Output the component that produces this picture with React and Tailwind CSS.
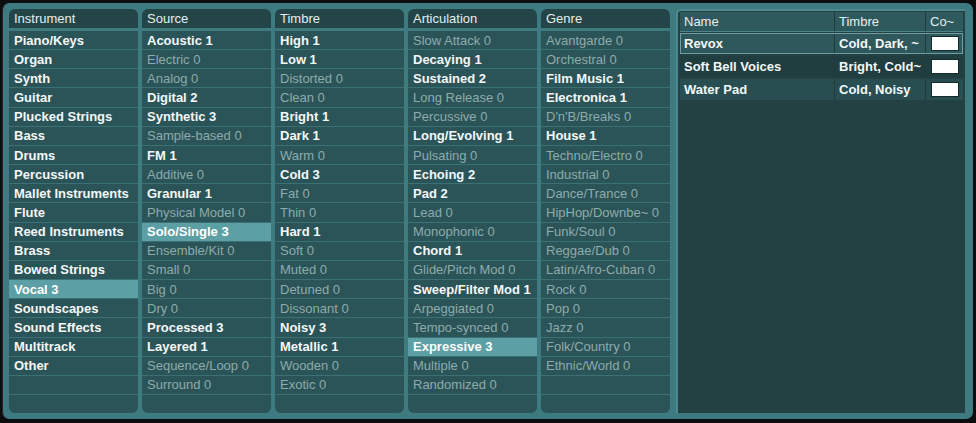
import React from 'react';

const font = { fontFamily: '"Liberation Sans", Arial, sans-serif' };

const columns = [
  {
    title: 'Instrument',
    items: [
      ['Piano/Keys', 1], ['Organ', 1], ['Synth', 1], ['Guitar', 1], ['Plucked Strings', 1],
      ['Bass', 1], ['Drums', 1], ['Percussion', 1], ['Mallet Instruments', 1], ['Flute', 1],
      ['Reed Instruments', 1], ['Brass', 1], ['Bowed Strings', 1], ['Vocal 3', 2], ['Soundscapes', 1],
      ['Sound Effects', 1], ['Multitrack', 1], ['Other', 1],
    ],
  },
  {
    title: 'Source',
    items: [
      ['Acoustic 1', 1], ['Electric 0', 0], ['Analog 0', 0], ['Digital 2', 1], ['Synthetic 3', 1],
      ['Sample-based 0', 0], ['FM 1', 1], ['Additive 0', 0], ['Granular 1', 1], ['Physical Model 0', 0],
      ['Solo/Single 3', 2], ['Ensemble/Kit 0', 0], ['Small 0', 0], ['Big 0', 0], ['Dry 0', 0],
      ['Processed 3', 1], ['Layered 1', 1], ['Sequence/Loop 0', 0], ['Surround 0', 0],
    ],
  },
  {
    title: 'Timbre',
    items: [
      ['High 1', 1], ['Low 1', 1], ['Distorted 0', 0], ['Clean 0', 0], ['Bright 1', 1],
      ['Dark 1', 1], ['Warm 0', 0], ['Cold 3', 1], ['Fat 0', 0], ['Thin 0', 0],
      ['Hard 1', 1], ['Soft 0', 0], ['Muted 0', 0], ['Detuned 0', 0], ['Dissonant 0', 0],
      ['Noisy 3', 1], ['Metallic 1', 1], ['Wooden 0', 0], ['Exotic 0', 0],
    ],
  },
  {
    title: 'Articulation',
    items: [
      ['Slow Attack 0', 0], ['Decaying 1', 1], ['Sustained 2', 1], ['Long Release 0', 0], ['Percussive 0', 0],
      ['Long/Evolving 1', 1], ['Pulsating 0', 0], ['Echoing 2', 1], ['Pad 2', 1], ['Lead 0', 0],
      ['Monophonic 0', 0], ['Chord 1', 1], ['Glide/Pitch Mod 0', 0], ['Sweep/Filter Mod 1', 1], ['Arpeggiated 0', 0],
      ['Tempo-synced 0', 0], ['Expressive 3', 2], ['Multiple 0', 0], ['Randomized 0', 0],
    ],
  },
  {
    title: 'Genre',
    items: [
      ['Avantgarde 0', 0], ['Orchestral 0', 0], ['Film Music 1', 1], ['Electronica 1', 1], ["D'n'B/Breaks 0", 0],
      ['House 1', 1], ['Techno/Electro 0', 0], ['Industrial 0', 0], ['Dance/Trance 0', 0], ['HipHop/Downbe~ 0', 0],
      ['Funk/Soul 0', 0], ['Reggae/Dub 0', 0], ['Latin/Afro-Cuban 0', 0], ['Rock 0', 0], ['Pop 0', 0],
      ['Jazz 0', 0], ['Folk/Country 0', 0], ['Ethnic/World 0', 0],
    ],
  },
];

const results = [
  { name: 'Revox', timbre: 'Cold, Dark, ~', tone: 'sel' },
  { name: 'Soft Bell Voices', timbre: 'Bright, Cold~', tone: 'dark' },
  { name: 'Water Pad', timbre: 'Cold, Noisy', tone: 'mid' },
];

function Column({ title, items }) {
  const rows = [...items];
  while (rows.length < 20) rows.push(['', 0]);
  return (
    <div className="flex h-[404px] w-[129px] flex-col">
      <div className="flex h-[19px] shrink-0 items-center rounded-t-[6px] bg-[#244548] px-[5px] text-[13px] leading-[15px] text-[#e4eeee]">
        {title}
      </div>
      <div className="mt-[3px] flex min-h-0 flex-1 flex-col gap-px overflow-hidden rounded-b-[6px] bg-[#3a7175]">
        {rows.map(([label, state], i) => (
          <div
            key={i}
            className={
              'flex min-h-0 flex-1 items-center px-[5px] text-[13px] leading-[15px] whitespace-nowrap ' +
              (state === 2
                ? 'bg-[#5c9fa4] font-bold text-white'
                : state === 1
                  ? 'bg-[#2b5458] font-bold text-[#f4f8f8]'
                  : 'bg-[#2b5458] text-[#8eabab]')
            }
          >
            {label}
          </div>
        ))}
      </div>
    </div>
  );
}

function ResultsPanel() {
  const rowBg = { sel: 'bg-[#2e585b] outline outline-1 -outline-offset-1 outline-[#6d9fa2]', dark: 'bg-[#203d3f]', mid: 'bg-[#294e51]' };
  return (
    <div className="ml-[6px] flex h-[404px] w-[289px] flex-col rounded-tl-[5px] border-l-2 border-t-2 border-[#4b8a8f] bg-[#234143] px-[2px] pt-px">
      <div className="flex h-[20px] border-b border-[#4d8387] bg-[#2e5a5d] text-[13px] text-[#e6efef]">
        <div className="flex w-[155px] items-center border-r border-[#1f3b3d] px-[4px]">Name</div>
        <div className="flex w-[91px] items-center border-r border-[#1f3b3d] px-[4px]">Timbre</div>
        <div className="flex flex-1 items-center px-[4px]">Co~</div>
      </div>
      <div className="mt-px flex flex-col gap-[2px]">
        {results.map((r) => (
          <div key={r.name} className={'flex h-[21px] text-[13px] font-bold text-[#f4f8f8] ' + rowBg[r.tone]}>
            <div className="flex w-[155px] items-center border-r border-[#1f3b3d] px-[4px]">{r.name}</div>
            <div className="flex w-[91px] items-center border-r border-[#1f3b3d] px-[4px] whitespace-nowrap">{r.timbre}</div>
            <div className="flex flex-1 items-center justify-center">
              <div className="h-[15px] w-[28px] border border-[#162a2b] bg-white" />
            </div>
          </div>
        ))}
      </div>
    </div>
  );
}

export default function App() {
  return (
    <div className="h-[423px] w-[976px] bg-[#0d0d0f] pb-[4px] pl-[2px] pr-[3px] pt-[3px]" style={font}>
      <div className="flex h-full rounded-[7px] border-l border-[#2a1d2c] bg-[#3d7b80] pl-[6px] pt-[6px]">
        <div className="flex gap-[4px]">
          {columns.map((c) => (
            <Column key={c.title} {...c} />
          ))}
        </div>
        <ResultsPanel />
      </div>
    </div>
  );
}
